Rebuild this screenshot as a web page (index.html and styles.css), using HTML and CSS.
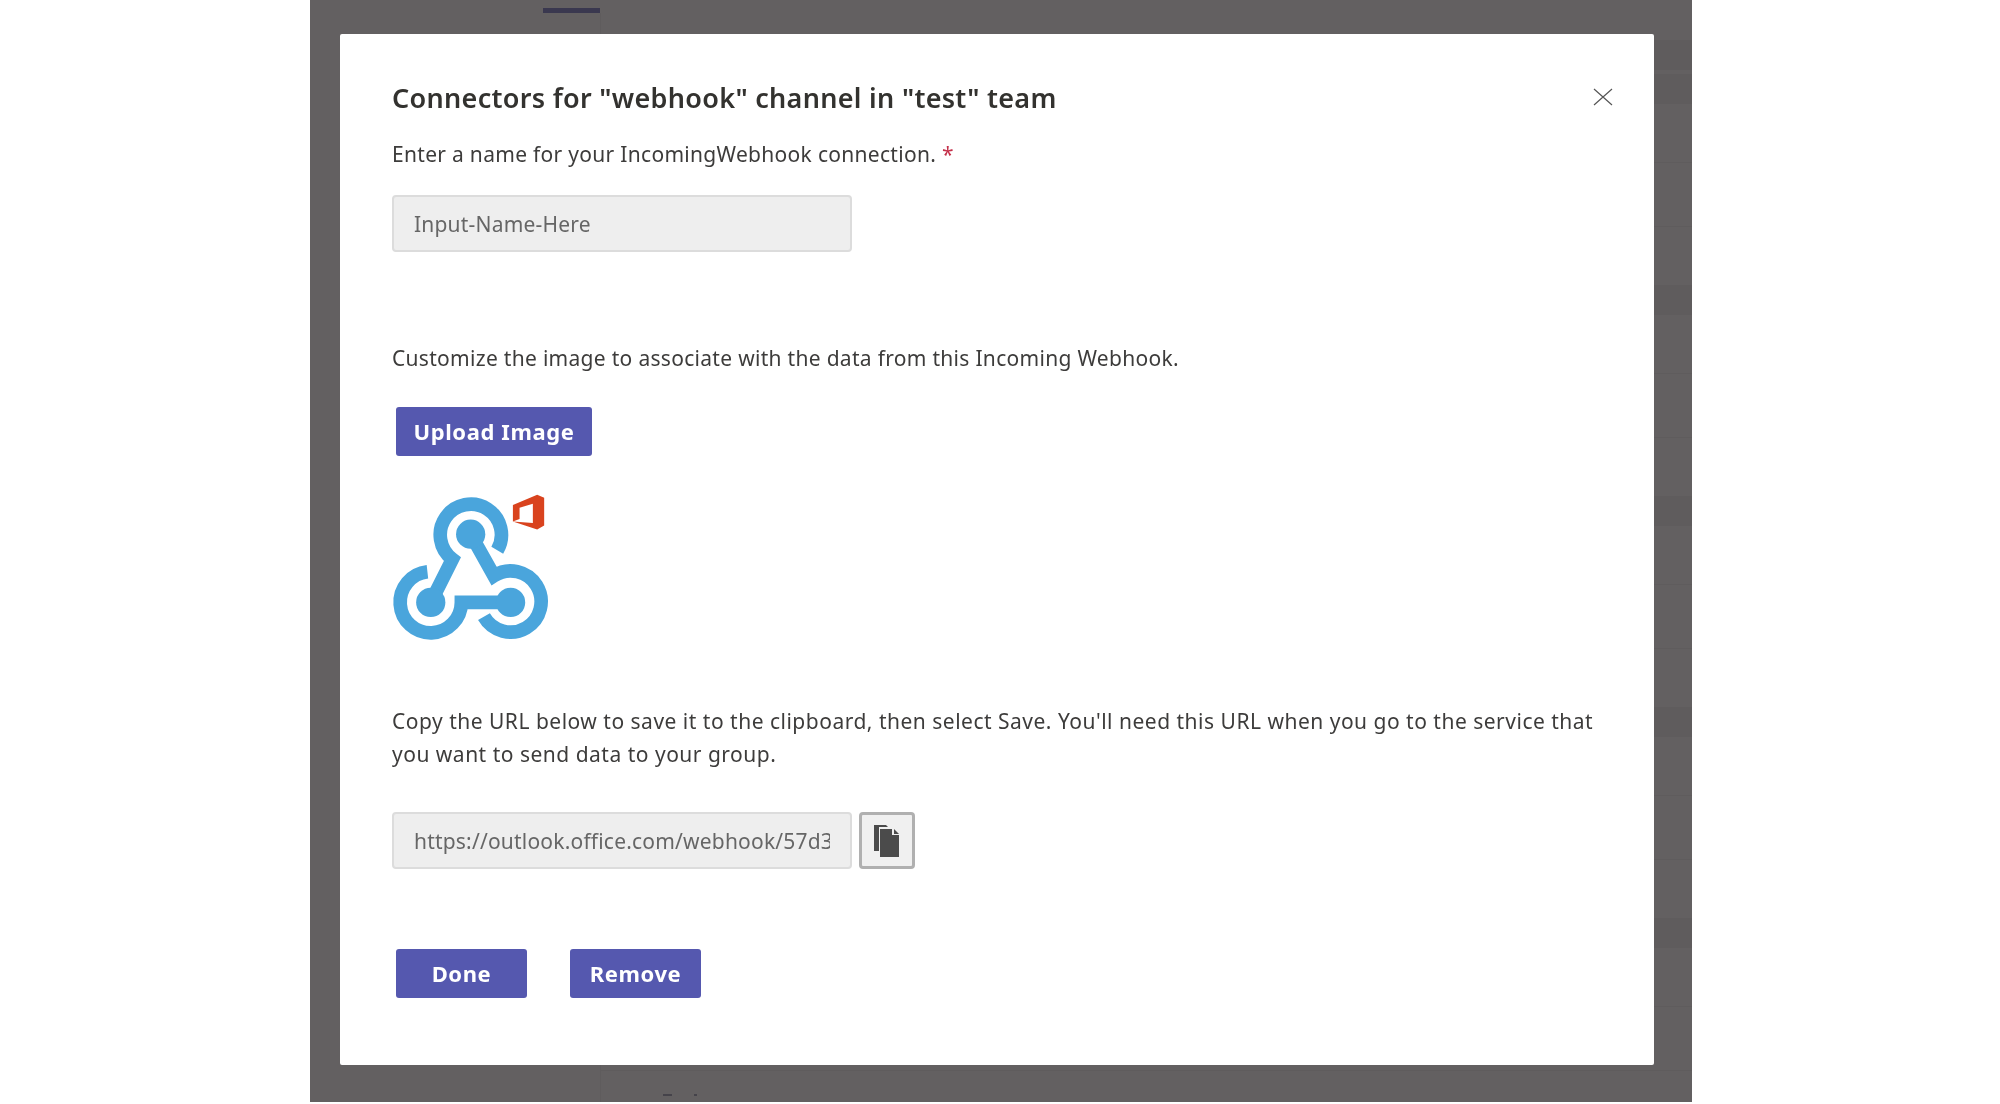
FILE: index.html
```html
<!DOCTYPE html>
<html lang="en">
<head>
<meta charset="utf-8">
<title>Connectors</title>
<link rel="stylesheet" href="styles.css">
</head>
<body>
<div class="backdrop">
  <div class="pane"></div>
  <div class="tab-marker"></div>
  <div class="speck speck-a"></div>
  <div class="speck speck-b"></div>
  <main class="modal">
    <header class="modal-head">
      <h1 class="title">Connectors for "webhook" channel in "test" team</h1>
      <button class="close" aria-label="Close">
        <svg width="20" height="18" viewBox="0 0 20 18"><path d="M1 1 19 17M19 1 1 17" fill="none" stroke="#555" stroke-width="1.2"/></svg>
      </button>
    </header>
    <label class="label label-name">Enter a name for your IncomingWebhook connection. <span class="req">*</span></label>
    <input class="field" type="text" placeholder="Input-Name-Here">
    <p class="label label-image">Customize the image to associate with the data from this Incoming Webhook.</p>
    <button class="btn btn-upload">Upload Image</button>
    <svg class="logo" width="160" height="153" viewBox="60 300 480 460">
      <g fill="none" stroke="#4aa5dc" stroke-width="41">
        <path d="M185 635 250 505A92 92 0 1 1 385 478"/>
        <path d="M305 430 375 555A92 92 0 1 1 345 678"/>
        <path d="M425 635H277A92 92 0 1 1 175 543"/>
      </g>
      <g fill="#4aa5dc">
        <circle cx="305" cy="430" r="44"/>
        <circle cx="185" cy="635" r="44"/>
        <circle cx="425" cy="635" r="44"/>
      </g>
      <path fill="#d9431e" d="M432 342 505 311 526 320V404L505 416 432 392 492 396V338L452 350V384L432 392Z"/>
    </svg>
    <p class="label label-copy">Copy the URL below to save it to the clipboard, then select Save. You'll need this URL when you go to the service that you want to send data to your group.</p>
    <div class="url-row">
      <input class="field" type="text" readonly value="https://outlook.office.com/webhook/57d3a1c8-4f2e-4b19-9d6a">
      <button class="copy" aria-label="Copy">
        <svg width="28" height="32" viewBox="0 0 28 32"><path fill="#4b4b4b" d="M1 0H13L15 2H6V26H1Z"/><path fill="#4b4b4b" d="M7 4H19V10H26V32H7Z"/><path fill="#4b4b4b" d="M21 4 26 9H21Z"/></svg>
      </button>
    </div>
    <div class="actions">
      <button class="btn btn-action">Done</button>
      <button class="btn btn-action">Remove</button>
    </div>
  </main>
</div>
</body>
</html>
```
FILE: styles.css
```css
* { box-sizing: border-box; }
html, body { margin: 0; height: 100%; background: #fff; }
body { padding-left: 310px; font-family: "Noto Sans", sans-serif; color: #3d3c3b; }
.backdrop {
  position: relative;
  width: 1382px;
  height: 1102px;
  padding: 34px 38px 0 30px;
  background-color: #636061;
}
.pane {
  position: absolute;
  left: 290px;
  right: 0;
  top: 13px;
  bottom: 0;
  border-left: 1px solid #5f5c5d;
  background-image: repeating-linear-gradient(180deg, #5f5c5d 0, #5f5c5d 30px, #636061 30px, #636061 88px, #5f5c5d 88px, #5f5c5d 89px, #636061 89px, #636061 152px, #5f5c5d 152px, #5f5c5d 153px, #636061 153px, #636061 211px);
  background-position: 0 61px;
}
.tab-marker { position: absolute; left: 233px; top: 8px; width: 57px; height: 5px; background: #3a384f; }
.speck { position: absolute; top: 1094px; height: 2px; background: #45434a; }
.speck-a { left: 353px; width: 9px; }
.speck-b { left: 384px; width: 3px; }
.modal {
  position: relative;
  display: flex;
  flex-direction: column;
  align-items: flex-start;
  width: 1314px;
  height: 1031px;
  padding: 46px 52px 0;
  background: #fff;
  border-radius: 2px;
  filter: blur(0.4px);
}
.modal-head { display: flex; justify-content: space-between; align-items: center; width: 100%; height: 36px; }
.title { margin: 0; font-size: 27px; font-weight: 600; line-height: 36px; color: #33322f; letter-spacing: 0.3px; }
.close { display: flex; margin: -2px -11px 0 0; padding: 0; border: 0; background: none; }
.label { margin: 0; font-size: 21px; line-height: 33px; letter-spacing: 0.3px; }
.label-name { margin-top: 22px; }
.req { color: #c4314b; }
.field {
  width: 460px;
  height: 57px;
  padding: 0 20px;
  border: 2px solid #dcdcdc;
  border-radius: 4px;
  background: #eeeeee;
  font: 21px "Noto Sans", sans-serif;
  letter-spacing: 0.2px;
  color: #666;
}
.field::placeholder { color: #666; opacity: 1; }
.label-name + .field { margin-top: 24px; }
.label-image { margin-top: 90px; }
.btn {
  height: 49px;
  padding: 0 0 2px;
  border: 0;
  border-radius: 3px;
  background: #5558af;
  color: #fff;
  font: 700 22px "Noto Sans", sans-serif;
  letter-spacing: 0.6px;
}
.btn-upload { width: 196px; margin: 32px 0 0 4px; }
.logo { display: block; margin: 35px 0 0 -3px; }
.label-copy { margin-top: 61px; width: 1205px; letter-spacing: 0.5px; }
.url-row { display: flex; gap: 7px; margin-top: 41px; }
.copy {
  display: flex;
  align-items: center;
  justify-content: center;
  width: 56px;
  height: 57px;
  padding: 0;
  border: 3px solid #b0b0b0;
  border-radius: 4px;
  background: #f0f0f0;
}
.actions { display: flex; gap: 43px; margin: 80px 0 0 4px; }
.btn-action { width: 131px; }
```
